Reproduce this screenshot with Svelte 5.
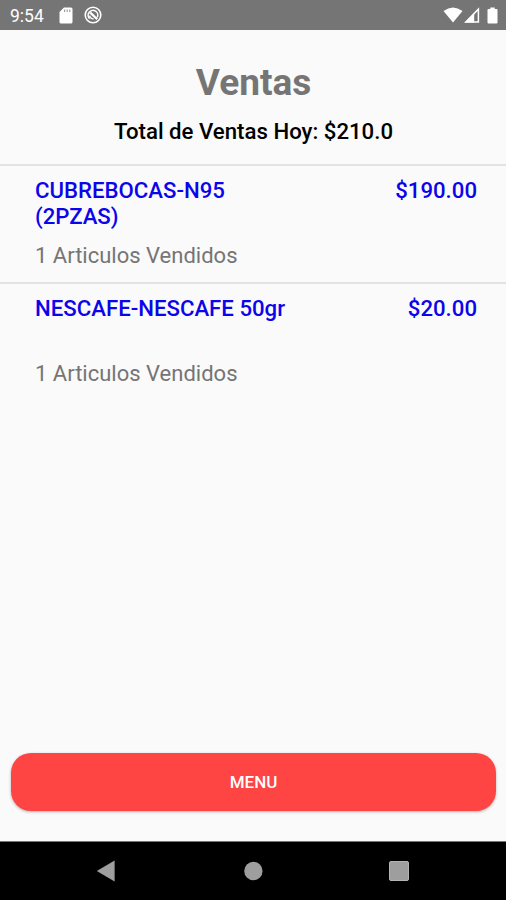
<script>
    let hora = $state('9:54');
    let total = $state('210.0');

    let ventas = $state([
        { producto: 'CUBREBOCAS-N95 (2PZAS)', precio: '190.00', cantidad: 1 },
        { producto: 'NESCAFE-NESCAFE 50gr', precio: '20.00', cantidad: 1 }
    ]);
</script>

<div class="screen">
    <div class="status-bar">
        <span class="clock">{hora}</span>
        <svg class="sd" width="14" height="17" viewBox="0 0 14 17">
            <path d="M5 0.5H12Q13.5 0.5 13.5 2V15Q13.5 16.5 12 16.5H2Q0.5 16.5 0.5 15V5Z" fill="#fff" />
            <path d="M5.6 2.6v2.4M8.2 2.6v2.4M10.8 2.6v2.4" stroke="#999" stroke-width="1.1" />
        </svg>
        <svg class="sync" width="18" height="18" viewBox="0 0 18 18" fill="none" stroke="#fff">
            <circle cx="9" cy="9" r="7.8" stroke-width="1.6" />
            <path d="M5.6 12.6A4.8 4.8 0 1 1 13.2 11.4" stroke-width="1.6" />
            <path d="M6.3 6.6L13.2 13.2" stroke-width="2.2" />
            <path d="M5.6 9.6A3.6 3.6 0 0 0 9.6 12.8" stroke-width="1.4" />
        </svg>
        <div class="status-right">
            <svg width="20" height="16" viewBox="0 0 20 16">
                <path d="M0.5 4Q10 -3 19.5 4L10 15.5Z" fill="#fff" />
            </svg>
            <svg class="signal" width="16" height="16" viewBox="0 0 16 16">
                <path d="M1.8 15L14.4 2.2V15Z" fill="none" stroke="#fff" stroke-width="1.5" />
                <path d="M1 15.5L10.2 6V15.5Z" fill="#fff" />
            </svg>
            <svg class="battery" width="11" height="17" viewBox="0 0 11 17">
                <path d="M3.3 0.5H7.7V2H9.5Q10.5 2 10.5 3V15.5Q10.5 16.5 9.5 16.5H1.5Q0.5 16.5 0.5 15.5V3Q0.5 2 1.5 2H3.3Z" fill="#fff" />
            </svg>
        </div>
    </div>

    <header>
        <h1>Ventas</h1>
        <p>Total de Ventas Hoy: ${total}</p>
    </header>

    <div class="list">
        {#each ventas as venta}
            <div class="item">
                <div class="row">
                    <span class="name">{venta.producto}</span>
                    <span class="price">${venta.precio}</span>
                </div>
                <div class="count">{venta.cantidad} Articulos Vendidos</div>
            </div>
        {/each}
    </div>

    <button class="menu-btn">MENU</button>

    <div class="nav-bar">
        <svg width="20" height="22" viewBox="0 0 20 22"><path d="M0.8 11L18.6 0.6V21.4Z" fill="#9e9e9e" /></svg>
        <svg width="20" height="20" viewBox="0 0 20 20"><circle cx="10.4" cy="10" r="9.2" fill="#9e9e9e" /></svg>
        <svg width="20" height="20" viewBox="0 0 20 20"><rect x="0.5" y="0.5" width="19" height="19" rx="1.5" fill="#9e9e9e" stroke="#b4b4b4" /></svg>
    </div>
</div>

<style>
    :global(body) { margin: 0; background: #fafafa; font-family: Roboto, sans-serif; }

    .screen { display: flex; flex-direction: column; height: 900px; overflow: hidden; background: #fafafa; }

    .status-bar { display: flex; align-items: center; box-sizing: border-box; height: 30px; padding: 0 8px 0 10px; background: #757575; color: #fff; flex-shrink: 0; }
    .clock { width: 49px; font-size: 17.5px; line-height: 30px; padding-top: 2px; }
    .sync { margin-left: 11px; }
    .status-right { display: flex; align-items: center; margin-left: auto; }
    .signal { margin-left: 1px; }
    .battery { margin-left: 7px; }

    header { box-sizing: border-box; height: 134px; padding: 31px 0 0 1px; text-align: center; flex-shrink: 0; }
    h1 { margin: 0; font-size: 37px; line-height: 43px; font-weight: 700; color: #757575; }
    header p { margin: 14px 0 0; font-size: 22.2px; line-height: 26px; font-weight: 500; color: #000; }

    .list { flex: 1; }
    .item { box-sizing: border-box; height: 118px; padding: 11px 29px 0 35px; border-top: 2px solid #e2e2e2; }
    .row { display: flex; justify-content: space-between; height: 65px; font-size: 22.2px; line-height: 26px; font-weight: 500; color: #0c04ea; }
    .name { width: 262px; }
    .count { font-size: 22px; line-height: 28px; color: #757575; }

    .menu-btn { height: 58px; margin: 0 10px 30px 11px; padding: 0; border: none; border-radius: 20px; background: #ff4444; color: #fff; font-family: inherit; font-size: 17px; line-height: 58px; font-weight: 500; box-shadow: 0 1px 3px rgba(0, 0, 0, 0.3); flex-shrink: 0; }

    .nav-bar { display: flex; align-items: center; justify-content: space-between; box-sizing: border-box; height: 59px; padding: 0 97px 0 96px; border-top: 1px solid #777; background: #000; flex-shrink: 0; }
</style>
